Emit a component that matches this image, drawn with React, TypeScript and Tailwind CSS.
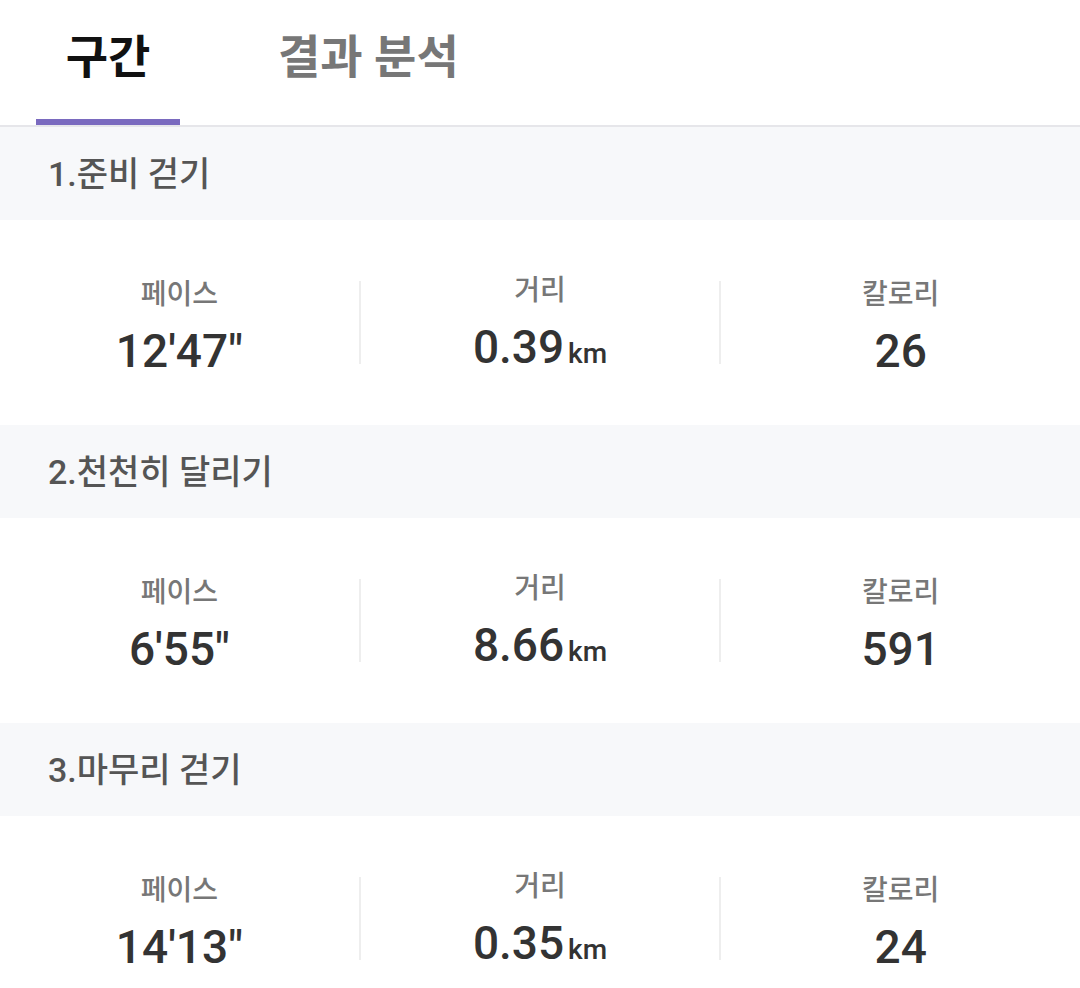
import React from 'react'

const font = { fontFamily: 'Roboto, "Noto Sans CJK KR", sans-serif' }

type Seg = { title: string; pace: string; dist: string; cal: string }

const segs: Seg[] = [
  { title: '1.준비 걷기', pace: `12'47"`, dist: '0.39', cal: '26' },
  { title: '2.천천히 달리기', pace: `6'55"`, dist: '8.66', cal: '591' },
  { title: '3.마무리 걷기', pace: `14'13"`, dist: '0.35', cal: '24' },
]

function Stat({ label, children }: { label: string; children: React.ReactNode }) {
  return (
    <div className="flex flex-1 flex-col items-center pt-[10px]">
      <span className="text-[28px] font-medium leading-[36px] text-[#777]">{label}</span>
      <span className="mt-[10px] text-[46px] font-medium leading-[56px] text-[#333]">{children}</span>
    </div>
  )
}

function Divider() {
  return <div className="h-[83px] w-[2px] bg-[#eeeeee]" />
}

export default function App() {
  return (
    <div className="min-h-screen w-[1080px] bg-white" style={font}>
      <div className="flex h-[127px] items-end border-b-2 border-[#e6e6ea]">
        <div className="ml-[36px] flex w-[144px] flex-col items-center">
          <span className="text-[46px] font-bold leading-[64px] text-[#111]">구간</span>
          <div className="mt-[30px] h-[6px] w-full bg-[#7a6abf]" />
        </div>
        <div className="ml-[98px] flex flex-col items-center">
          <span className="text-[46px] font-bold leading-[64px] text-[#777]">결과 분석</span>
          <div className="mt-[30px] h-[6px]" />
        </div>
      </div>
      {segs.map((s) => (
        <div key={s.title}>
          <div className="flex h-[93px] items-center bg-[#f7f8fa] pl-[48px]">
            <span className="text-[34px] font-medium leading-[44px] text-[#555]">{s.title}</span>
          </div>
          <div className="flex h-[205px] items-center">
            <Stat label="페이스">{s.pace}</Stat>
            <Divider />
            <Stat label="거리">
              {s.dist}
              <span className="ml-[4px] text-[28px]">km</span>
            </Stat>
            <Divider />
            <Stat label="칼로리">{s.cal}</Stat>
          </div>
        </div>
      ))}
    </div>
  )
}
